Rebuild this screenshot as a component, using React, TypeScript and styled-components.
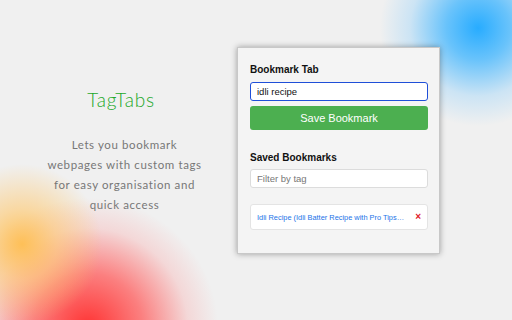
import styled, { createGlobalStyle } from "styled-components";

const GlobalStyle = createGlobalStyle`
  html, body {
    margin: 0;
    padding: 0;
  }
  body {
    width: 512px;
    height: 320px;
    overflow: hidden;
  }
`;

const Page = styled.div`
  width: 512px;
  height: 320px;
  display: flex;
  align-items: flex-start;
  background-color: #f0f0f0;
  background-image:
    radial-gradient(circle at 478px 28px, rgba(40, 172, 255, 1) 0, rgba(60, 180, 255, 0.75) 32px, rgba(120, 200, 255, 0.3) 68px, rgba(240, 240, 240, 0) 98px),
    radial-gradient(circle at 22px 244px, rgba(255, 190, 80, 0.95) 0, rgba(255, 200, 110, 0.6) 35px, rgba(255, 220, 160, 0) 80px),
    radial-gradient(circle at 88px 328px, rgba(255, 50, 50, 1) 0, rgba(255, 90, 90, 0.75) 55px, rgba(250, 170, 170, 0.35) 100px, rgba(240, 240, 240, 0) 130px);
  font-family: "Liberation Sans", Arial, sans-serif;
`;

const Intro = styled.div`
  width: 242px;
  padding-top: 88px;
  display: flex;
  flex-direction: column;
  align-items: center;
  text-align: center;
  font-family: Lato, "Open Sans", sans-serif;
`;

const Title = styled.h1`
  margin: 0;
  font-size: 19px;
  font-weight: 300;
  letter-spacing: 0.8px;
  color: #22a82a;
`;

const Blurb = styled.p`
  margin: 24px 0 0;
  padding-left: 7px;
  font-size: 11.5px;
  font-weight: 400;
  line-height: 20px;
  letter-spacing: 0.6px;
  color: #777;
  white-space: nowrap;
`;

const Panel = styled.div`
  margin-top: 47px;
  margin-left: -5px;
  width: 203px;
  height: 207px;
  box-sizing: border-box;
  padding: 15px 11px 0 12px;
  background: #f4f4f4;
  border: 1px solid #c8c8c8;
  box-shadow: 0 0 6px rgba(0, 0, 0, 0.35);
  display: flex;
  flex-direction: column;
`;

const Label = styled.h2<{ $gap?: number }>`
  margin: ${(p) => p.$gap ?? 0}px 0 0;
  font-size: 10px;
  font-weight: 700;
  color: #111;
  line-height: 14px;
`;

const Field = styled.div<{ $focused?: boolean }>`
  margin-top: ${(p) => (p.$focused ? 5 : 4)}px;
  height: 19px;
  box-sizing: border-box;
  display: flex;
  align-items: center;
  padding: 0 6px;
  background: #fff;
  border: ${(p) => (p.$focused ? "1.5px solid #1f4fd8" : "1px solid #dcdcdc")};
  border-radius: 3px;
  font-size: 9.5px;
  color: ${(p) => (p.$focused ? "#111" : "#777")};
`;

const SaveButton = styled.button`
  margin-top: 5px;
  height: 24px;
  border: none;
  border-radius: 3px;
  background: #4caf50;
  color: #fff;
  font-family: "Liberation Sans", Arial, sans-serif;
  font-size: 11px;
  cursor: pointer;
`;

const BookmarkItem = styled.div`
  margin-top: 16px;
  height: 26px;
  box-sizing: border-box;
  display: flex;
  align-items: center;
  gap: 9px;
  padding: 0 6px 0 6px;
  background: #fff;
  border: 1px solid #e4e4e4;
  border-radius: 3px;
`;

const BookmarkLink = styled.a`
  flex: 1;
  min-width: 0;
  overflow: hidden;
  white-space: nowrap;
  text-overflow: ellipsis;
  font-size: 7.4px;
  color: #1a73e8;
  text-decoration: none;
`;

const Remove = styled.span`
  color: #e0202a;
  font-size: 10px;
  font-weight: 700;
  line-height: 1;
`;

export default function App() {
  return (
    <>
      <GlobalStyle />
      <Page>
        <Intro>
          <Title>TagTabs</Title>
          <Blurb>
            Lets you bookmark
            <br />
            webpages with custom tags
            <br />
            for easy organisation and
            <br />
            quick access
          </Blurb>
        </Intro>
        <Panel>
          <Label>Bookmark Tab</Label>
          <Field $focused>idli recipe</Field>
          <SaveButton>Save Bookmark</SaveButton>
          <Label $gap={21}>Saved Bookmarks</Label>
          <Field>Filter by tag</Field>
          <BookmarkItem>
            <BookmarkLink href="#">
              Idli Recipe (Idli Batter Recipe with Pro Tips) - Swasthi's Recipes
            </BookmarkLink>
            <Remove>×</Remove>
          </BookmarkItem>
        </Panel>
      </Page>
    </>
  );
}
